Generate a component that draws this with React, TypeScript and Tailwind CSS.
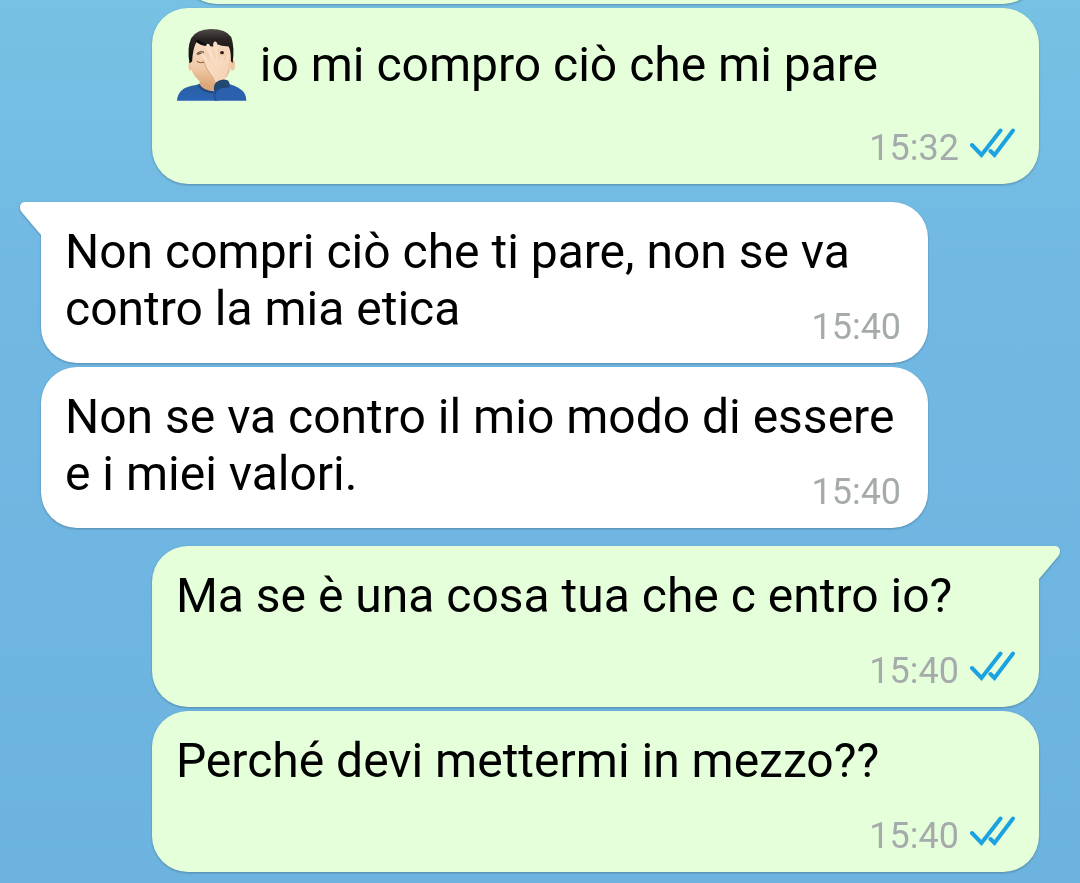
import type { ReactNode } from "react";

function Facepalm() {
  return (
    <svg
      role="img"
      aria-label="Man facepalming"
      viewBox="80 84 213 219"
      className="inline h-[72px] w-[72px] align-[-20px]"
    >
      <defs>
        <linearGradient id="face" x1="0" y1="0" x2="0" y2="1">
          <stop offset="0" stopColor="#f7dcc3" />
          <stop offset="0.6" stopColor="#f1cba9" />
          <stop offset="1" stopColor="#dca579" />
        </linearGradient>
        <linearGradient id="hand" x1="0" y1="0" x2="1" y2="1">
          <stop offset="0" stopColor="#fae3cd" />
          <stop offset="1" stopColor="#f5d2b3" />
        </linearGradient>
        <linearGradient id="shirt" x1="0" y1="0" x2="0" y2="1">
          <stop offset="0" stopColor="#2b5f9f" />
          <stop offset="1" stopColor="#2a64b8" />
        </linearGradient>
        <linearGradient id="hair" x1="0" y1="0" x2="0" y2="1">
          <stop offset="0" stopColor="#504a48" />
          <stop offset="0.3" stopColor="#292423" />
          <stop offset="1" stopColor="#0d0a0a" />
        </linearGradient>
      </defs>
      <ellipse cx="121" cy="196" rx="6" ry="15" fill="#ecc19b" />
      <ellipse cx="249" cy="193" rx="8" ry="18" fill="#efc6a2" />
      <path d="M150 235H203V275Q175 290 146 270Z" fill="#dba67c" />
      <path d="M120 150Q118 205 133 226Q155 254 184 257Q214 253 233 227Q249 205 248 150Q232 115 184 115Q134 117 120 150Z" fill="url(#face)" />
      <path d="M80 302Q82 266 122 257L148 252Q158 273 196 276L206 302Z" fill="url(#shirt)" />
      <path d="M148 251Q158 271 196 274L197 280Q154 279 142 254Z" fill="#224b83" />
      <path d="M118 188Q110 142 123 112Q139 85 183 84Q229 84 245 108Q256 139 249 188L244 181Q245 151 237 137L216 135L205 131L190 137L166 136Q149 132 139 124Q128 143 126 183Z" fill="url(#hair)" />
      <path d="M136 121Q153 132 173 133Q153 125 144 116Z" fill="#060505" />
      <path d="M141 158Q150 150 161 154M143 161Q153 155 161 160" fill="none" stroke="#3b2518" strokeWidth="3" strokeLinecap="round" />
      <path d="M141 183Q150 189 161 186" fill="none" stroke="#87583b" strokeWidth="3" strokeLinecap="round" />
      <ellipse cx="217" cy="156" rx="6" ry="5" fill="#2d211a" />
      <path d="M164 184L156 168Q152 158 156 156Q160 155 164 163L178 183L169 142Q167 131 173 129Q179 128 182 139L193 162L190 133Q190 122 196 122Q202 122 204 134L210 164L221 170L232 157Q237 149 240 156Q242 164 237 183Q237 213 224 239L196 247Q189 230 176 213Q167 201 164 184Z" fill="url(#hand)" />
      <path d="M160 179Q168 205 180 219Q192 233 196 246" fill="none" stroke="#d69d73" strokeWidth="2.500" strokeLinecap="round" />
      <path d="M181 182L173 154M196 172L190 150M210 174L205 147M223 181L230 164" fill="none" stroke="#e5b892" strokeWidth="1.500" strokeLinecap="round" />
      <path d="M196 302L192 263L235 250Q277 263 286 281Q291 291 291 302Z" fill="#2b60ae" />
      <path d="M193 270Q190 257 199 246Q217 233 235 241Q242 248 239 261Q210 258 198 276Z" fill="#214870" />
      <path d="M196 302Q193 282 198 273Q212 259 239 261" fill="none" stroke="#204782" strokeWidth="3" />
    </svg>
  );
}

function ReadTicks() {
  return (
    <svg
      role="img"
      aria-label="Read"
      viewBox="0 0 46 32"
      className="h-8 w-[46px]"
      fill="none"
      stroke="#1ba2e0"
      strokeWidth="4"
      strokeLinecap="round"
    >
      <path d="M3 18L12.500 28L31.500 3.500M21.500 24L25.500 28L44 3.500" />
    </svg>
  );
}

type MessageProps = {
  time: string;
  sent?: boolean;
  tail?: boolean;
  children: ReactNode;
};

function Message({ time, sent = false, tail = false, children }: MessageProps) {
  const side = sent ? "self-end bg-[#e5ffdb] pr-6" : "self-start bg-white pr-[27px]";
  const corner = tail ? (sent ? "rounded-tr-none" : "rounded-tl-none") : "";
  return (
    <article
      className={`relative w-8/9 rounded-[36px] pt-[21px] pb-[15px] pl-6 drop-shadow-[0_1px_1px_rgba(50,80,100,0.45)] ${side} ${corner}`}
    >
      {tail && (
        <svg
          aria-hidden="true"
          viewBox="0 0 22 34"
          className={`absolute top-0 h-[34px] w-[22px] ${
            sent ? "-right-[21px] -scale-x-100 text-[#e5ffdb]" : "-left-[21px] text-white"
          }`}
        >
          <path d="M22 0H5C0 0-2 6 2 10.500L21 33H22Z" fill="currentColor" />
        </svg>
      )}
      <div className="flow-root text-5xl leading-[57px] text-black">
        {children}
        <span className="float-right mt-[26px] flex items-start gap-2.5 text-4xl leading-[42px] text-[#a5abab]">
          <time>{time}</time>
          {sent && <ReadTicks />}
        </span>
      </div>
    </article>
  );
}

export default function App() {
  return (
    <main className="min-h-screen overflow-hidden bg-linear-to-b from-[#77c1e4] via-[#71b9e3] via-30% to-[#6cb3e0] px-[41px] pb-2.5 font-[Roboto,sans-serif]">
      <div className="flex flex-col gap-[18px]">
        <section className="flex flex-col gap-1">
          <div className="-mt-[76px] h-20 w-[86%] self-end rounded-[36px] bg-[#e5ffdb] drop-shadow-[0_1px_1px_rgba(50,80,100,0.45)]" />
          <Message sent time="15:32">
            <Facepalm /> io mi compro ciò che mi pare
          </Message>
        </section>
        <section className="flex flex-col gap-1">
          <Message tail time="15:40">
            Non compri ciò che ti pare, non se va contro la mia etica
          </Message>
          <Message time="15:40">
            Non se va contro il mio modo di essere e i miei valori.
          </Message>
        </section>
        <section className="flex flex-col gap-1">
          <Message sent tail time="15:40">
            Ma se è una cosa tua che c entro io?
          </Message>
          <Message sent time="15:40">
            Perché devi mettermi in mezzo??
          </Message>
        </section>
      </div>
    </main>
  );
}
